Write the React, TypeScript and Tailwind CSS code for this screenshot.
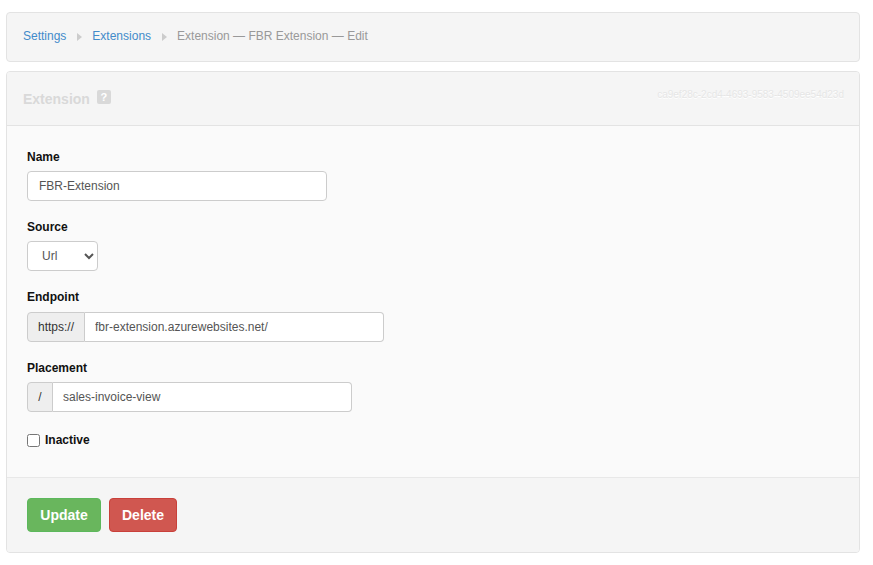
import { ReactNode } from 'react';

function Label({ children, className = 'mb-[5px]' }: { children: ReactNode; className?: string }) {
  return <label className={`block text-[12px] leading-[17px] font-bold text-[#111] ${className}`}>{children}</label>;
}

function Addon({ children, className }: { children: ReactNode; className: string }) {
  return (
    <div className={`flex items-center justify-center bg-[#eeeeee] border border-[#cccccc] rounded-l-[4px] text-[12px] text-[#333] ${className}`}>
      {children}
    </div>
  );
}

function Sep() {
  return (
    <svg width="5" height="8" viewBox="0 0 5 8" className="mx-[10.5px] mt-[1px]">
      <path d="M0 0 L5 4 L0 8 Z" fill="#cccccc" />
    </svg>
  );
}

export default function App() {
  return (
    <div className="min-h-screen bg-white pt-[12px] pl-[6px] pr-[13px] font-['Liberation_Sans',Arial,sans-serif]">
      {/* Breadcrumb */}
      <div className="h-[50px] mb-[9px] px-[16px] pb-[2px] flex items-center bg-[#f5f5f5] border border-[#e3e3e3] rounded-[4px] text-[12px]">
        <a className="text-[#428bca]">Settings</a>
        <Sep />
        <a className="text-[#428bca]">Extensions</a>
        <Sep />
        <span className="text-[#999999]">Extension — FBR Extension — Edit</span>
      </div>

      {/* Panel */}
      <div className="bg-[#fafafa] border border-[#e3e3e3] rounded-[4px] overflow-hidden">
        <div className="h-[54px] pl-[16px] pr-[15px] flex items-center justify-between bg-[#f5f5f5] border-b border-[#e3e3e3]">
          <div className="flex items-center gap-[7px]">
            <span className="text-[14px] font-bold text-[#d9d9d9] mt-[2px]">Extension</span>
            <span className="w-[14px] h-[14px] -mt-[3px] rounded-[2px] bg-[#d9d9d9] text-white text-[11px] font-bold leading-[14px] text-center">?</span>
          </div>
          <span className="text-[10px] text-[#e6e6e6] -mt-[8px] [text-shadow:0_1px_0_#fff]">ca9ef28c-2cd4-4693-9583-4509ee54d23d</span>
        </div>

        <div className="h-[352px] pt-[23px] pl-[20px] border-b border-[#e8e8e8]">
          <Label>Name</Label>
          <input
            readOnly
            defaultValue="FBR-Extension"
            className="block w-[300px] h-[30px] px-[11px] bg-white border border-[#cccccc] rounded-[4px] text-[12px] text-[#555] outline-none"
          />

          <div className="mt-[18px]">
            <Label>Source</Label>
            <select className="block w-[71px] h-[30px] pl-[10px] bg-white border border-[#cccccc] rounded-[4px] text-[12px] text-[#555] outline-none">
              <option>Url</option>
            </select>
          </div>

          <div className="mt-[18px]">
            <Label className="mb-[6px]">Endpoint</Label>
            <div className="flex w-[357px] h-[30px]">
              <Addon className="w-[58px]">https://</Addon>
              <input
                readOnly
                defaultValue="fbr-extension.azurewebsites.net/"
                className="flex-1 min-w-0 px-[10px] bg-white border border-l-0 border-[#cccccc] rounded-r-[4px] text-[12px] text-[#555] outline-none"
              />
            </div>
          </div>

          <div className="mt-[18px]">
            <Label>Placement</Label>
            <div className="flex w-[325px] h-[30px]">
              <Addon className="w-[26px]">/</Addon>
              <input
                readOnly
                defaultValue="sales-invoice-view"
                className="flex-1 min-w-0 px-[10px] bg-white border border-l-0 border-[#cccccc] rounded-r-[4px] text-[12px] text-[#555] outline-none"
              />
            </div>
          </div>

          <label className="flex items-center gap-[5px] mt-[19px] text-[12px] font-bold text-[#111]">
            <input type="checkbox" readOnly className="m-0 w-[13px] h-[13px]" />
            Inactive
          </label>
        </div>

        <div className="h-[74px] pt-[20px] pl-[20px] flex items-start gap-[8px] bg-[#f5f5f5]">
          <button className="w-[74px] h-[34px] bg-[#69b65d] border border-[#5cb85c] rounded-[4px] text-[14px] font-bold text-white">Update</button>
          <button className="w-[68px] h-[34px] bg-[#d05750] border border-[#c9403a] rounded-[4px] text-[14px] font-bold text-white">Delete</button>
        </div>
      </div>
    </div>
  );
}
